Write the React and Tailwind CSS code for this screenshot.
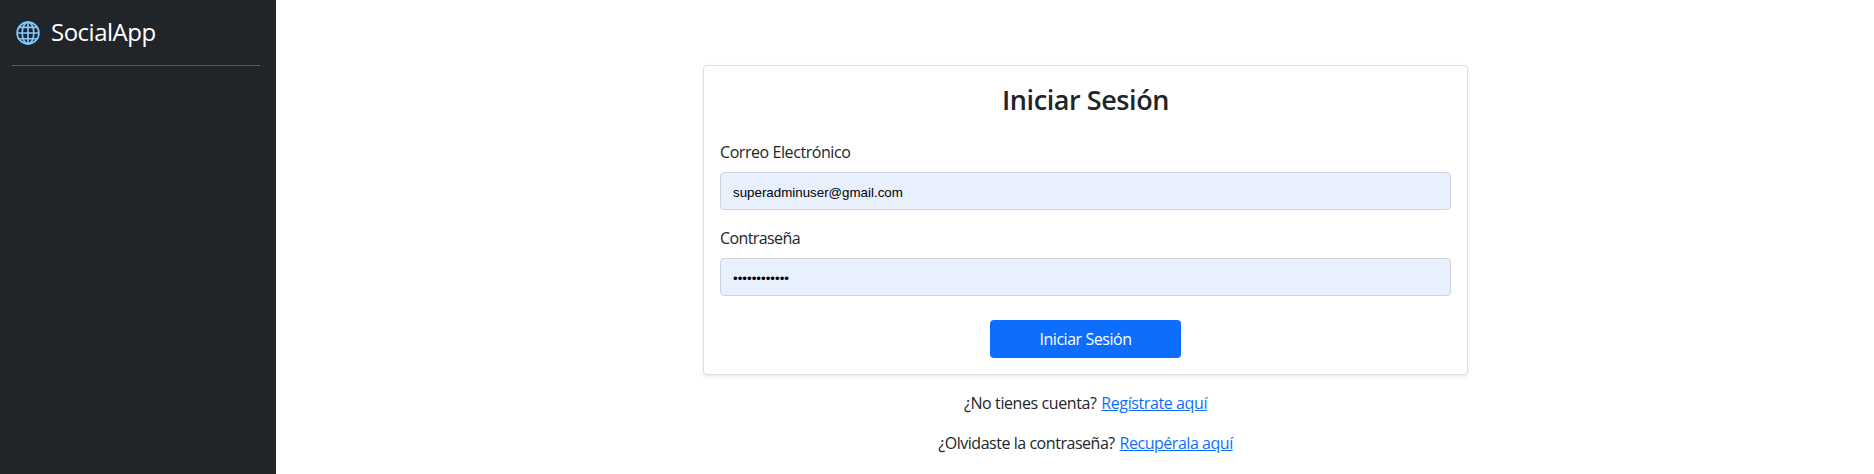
import React from "react";

function Globe() {
  return (
    <svg className="size-6 shrink-0" viewBox="0 0 24 24" fill="none" stroke="#83cbff" strokeWidth="1.65">
      <circle cx="12" cy="12" r="10.9" />
      <ellipse cx="12" cy="12" rx="5.8" ry="10.9" />
      <path d="M12 1v22M1 12h22M3 6.3h18M3 17.7h18" />
    </svg>
  );
}

function Field({ label, id, labelClass, children }) {
  return (
    <div className="mb-4">
      <label htmlFor={id} className="mb-2 flex h-6 items-center pt-px">
        <span className={labelClass}>{label}</span>
      </label>
      {children}
    </div>
  );
}

const inputClass =
  "block h-[38px] w-full rounded border border-[#ced4da] bg-[#e8f0fe] px-3 pt-[8px] pb-[5px] font-['Liberation_Sans',Arial,sans-serif] text-[13.333px] text-black outline-none";

export default function App() {
  return (
    <div className="flex h-[474px] overflow-hidden bg-white font-['Open_Sans','Noto_Sans',sans-serif] text-base leading-6 text-[#212529]">
      <aside className="w-[276px] shrink-0 bg-[#212529] px-3 pt-3.5 text-white">
        <div className="flex h-[37px] items-center gap-[11px] pl-1">
          <Globe />
          <span className="whitespace-nowrap pb-0.5 text-2xl tracking-[-0.5px]">SocialApp</span>
        </div>
        <hr className="mt-3.5 w-[248px] border-t border-[#595c5f]" />
      </aside>
      <main className="flex flex-1 flex-col items-center pt-[65px] pl-[21px]">
        <section className="w-[765px] rounded border border-[#dfdfdf] bg-white p-4 shadow-[0_2px_4px_rgba(0,0,0,0.075)]">
          <h3 className="mb-[23px] pt-px text-center text-[27px] font-semibold leading-[33.6px] tracking-[-0.42px]">
            Iniciar Sesión
          </h3>
          <form>
            <Field id="email" label="Correo Electrónico" labelClass="tracking-[-0.43px]">
              <input id="email" type="email" defaultValue="superadminuser@gmail.com" className={inputClass} />
            </Field>
            <Field id="password" label="Contraseña" labelClass="tracking-[-0.6px]">
              <input id="password" type="password" defaultValue="abcdefghijkl" className={inputClass} />
            </Field>
            <button
              type="button"
              className="mx-auto mt-6 block h-[38px] w-[191px] rounded bg-[#0d6efd] pt-px tracking-[-0.45px] text-white"
            >
              Iniciar Sesión
            </button>
          </form>
        </section>
        <p className="mt-4 whitespace-nowrap tracking-[-0.4px]">
          ¿No tienes cuenta? <a className="ml-px text-[#0d6efd] underline" href="#">Regístrate aquí</a>
        </p>
        <p className="mt-4 whitespace-nowrap tracking-[-0.46px]">
          ¿Olvidaste la contraseña? <a className="ml-px text-[#0d6efd] underline" href="#">Recupérala aquí</a>
        </p>
      </main>
    </div>
  );
}
